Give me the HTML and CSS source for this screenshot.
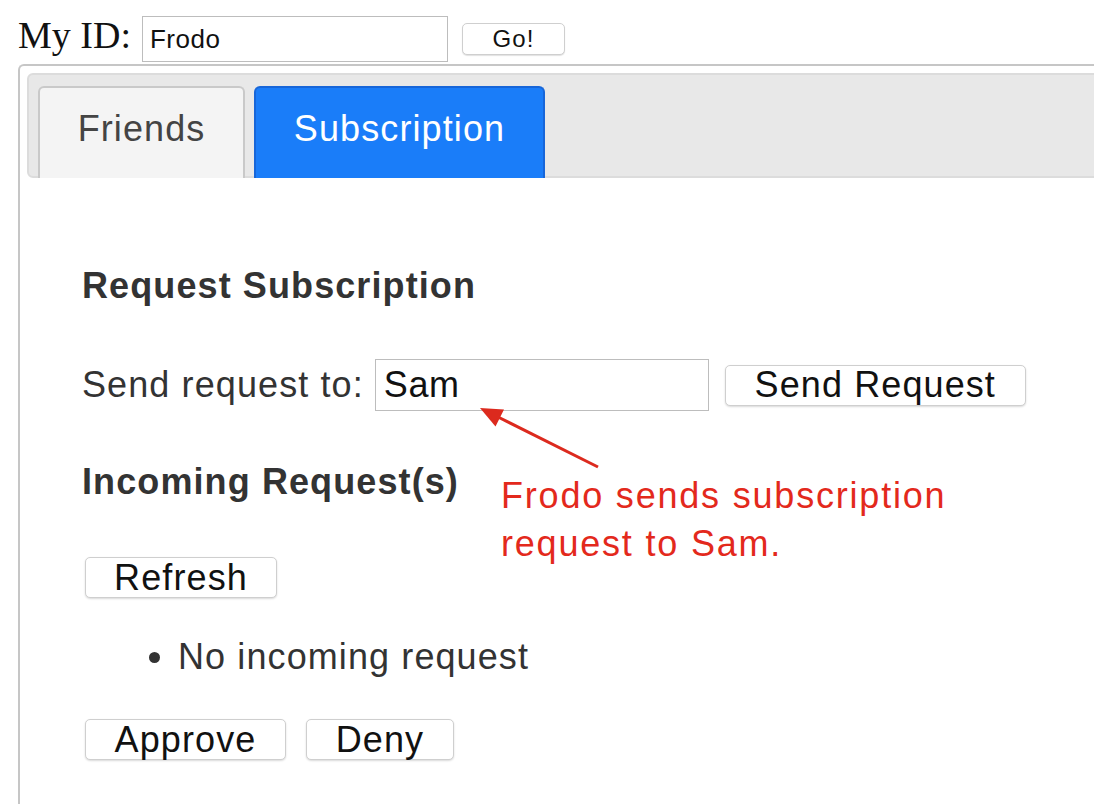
FILE: index.html
```html
<!DOCTYPE html>
<html>
<head>
<meta charset="utf-8">
<link rel="stylesheet" href="styles.css">
</head>
<body>
<div class="page">
  <div class="idrow">
    <span class="idlabel">My ID:</span>
    <input class="idinput" type="text" value="Frodo">
    <button class="gobtn">Go!</button>
  </div>
  <div class="panel">
    <div class="tabbar">
      <div class="tab tab-friends">Friends</div>
      <div class="tab tab-active">Subscription</div>
    </div>
    <div class="content">
      <h3 class="heading h-request">Request Subscription</h3>
      <div class="sendrow">
        <span class="sendlabel">Send request to:</span>
        <input class="sendinput" type="text" value="Sam">
        <button class="btn sendbtn">Send Request</button>
      </div>
      <h3 class="heading h-incoming">Incoming Request(s)</h3>
      <button class="btn refreshbtn">Refresh</button>
      <ul class="reqlist">
        <li>No incoming request</li>
      </ul>
      <div class="actions">
        <button class="btn approvebtn">Approve</button>
        <button class="btn denybtn">Deny</button>
      </div>
    </div>
  </div>
  <div class="note">Frodo sends subscription<br>request to Sam.</div>
  <svg class="arrow" width="140" height="80" viewBox="0 0 140 80">
    <line x1="128" y1="67" x2="28" y2="17" stroke="#dc2a1e" stroke-width="3"/>
    <polygon points="10,8 34,9.5 25.5,26.5" fill="#dc2a1e"/>
  </svg>
</div>
</body>
</html>
```
FILE: styles.css
```css
html, body {
  margin: 0;
  padding: 0;
  background: #ffffff;
  overflow: hidden;
}
.page {
  width: 1094px;
  height: 804px;
  overflow: hidden;
  padding-left: 18px;
  box-sizing: border-box;
  position: relative;
}
.idrow {
  display: flex;
  align-items: flex-start;
  height: 64px;
}
.idlabel {
  font-family: "Liberation Serif", serif;
  font-size: 38px;
  line-height: 38px;
  color: #111;
  margin: 16px 11px 0 0;
}
.idinput {
  width: 306px;
  height: 46px;
  box-sizing: border-box;
  border: 1px solid #bdbdbd;
  padding: 0 7px;
  font-family: "Liberation Sans", sans-serif;
  font-size: 26px;
  letter-spacing: 0.5px;
  color: #111;
  margin: 16px 14px 0 0;
  outline: none;
}
.gobtn {
  width: 103px;
  height: 32px;
  box-sizing: border-box;
  border: 1px solid #cfcfcf;
  border-radius: 5px;
  background: #fff;
  box-shadow: 0 1px 1px rgba(0,0,0,0.12);
  font-family: "Liberation Sans", sans-serif;
  font-size: 24px;
  letter-spacing: 1px;
  color: #111;
  padding: 0;
  line-height: 30px;
  margin-top: 23px;
}
.panel {
  width: 1200px;
  height: 760px;
  border-top: 2px solid #c6c6c6;
  border-left: 2px solid #c6c6c6;
  border-top-left-radius: 6px;
  padding: 7px 0 0 7px;
  box-sizing: border-box;
}
.tabbar {
  display: flex;
  align-items: flex-end;
  gap: 9px;
  height: 105px;
  box-sizing: border-box;
  background: #e8e8e8;
  border: 2px solid #dcdcdc;
  border-radius: 6px 0 0 6px;
  padding-left: 9px;
}
.tab {
  height: 92px;
  box-sizing: border-box;
  display: flex;
  align-items: center;
  justify-content: center;
  font-family: "Liberation Sans", sans-serif;
  font-size: 36px;
  letter-spacing: 1.1px;
  border-radius: 6px 6px 0 0;
  margin-bottom: -2px;
  padding-bottom: 9px;
}
.tab-friends {
  width: 207px;
  background: #f4f4f4;
  border: 2px solid #c9c9c9;
  border-bottom: none;
  color: #444;
}
.tab-active {
  width: 291px;
  background: #1a7df9;
  border: 2px solid #1766d9;
  border-bottom: none;
  color: #fff;
}
.content {
  padding-left: 55px;
  padding-top: 88px;
  font-family: "Liberation Sans", sans-serif;
  font-size: 36px;
  letter-spacing: 1.1px;
  color: #333;
}
.heading {
  margin: 0;
  font-size: 36px;
  font-weight: bold;
  line-height: 40px;
  color: #333;
}
.sendrow {
  display: flex;
  align-items: center;
  margin-top: 53px;
  height: 52px;
}
.sendlabel {
  margin-right: 11px;
}
.sendinput {
  width: 334px;
  height: 52px;
  box-sizing: border-box;
  border: 1px solid #bdbdbd;
  padding: 0 8px;
  font-family: "Liberation Sans", sans-serif;
  font-size: 36px;
  letter-spacing: 0.6px;
  color: #111;
  outline: none;
  margin: 0 16px 0 0;
}
.btn {
  height: 41px;
  box-sizing: border-box;
  border: 1px solid #cfcfcf;
  border-radius: 5px;
  background: #fff;
  box-shadow: 0 1px 2px rgba(0,0,0,0.15);
  font-family: "Liberation Sans", sans-serif;
  font-size: 36px;
  letter-spacing: 1.1px;
  line-height: 38px;
  color: #111;
  padding: 0;
}
.sendbtn { width: 301px; }
.h-incoming { margin-top: 51px; }
.refreshbtn {
  display: block;
  width: 192px;
  margin-top: 55px;
  margin-left: 3px;
}
.reqlist {
  margin: 39px 0 0 0;
  padding-left: 96px;
  line-height: 40px;
}
.actions {
  display: flex;
  gap: 20px;
  margin-top: 42px;
  margin-left: 3px;
}
.approvebtn { width: 201px; }
.denybtn { width: 148px; }
.note {
  position: absolute;
  left: 501px;
  top: 472px;
  color: #e3291c;
  font-family: "Liberation Sans", sans-serif;
  font-size: 36px;
  letter-spacing: 1.8px;
  line-height: 48px;
}
.arrow {
  position: absolute;
  left: 470px;
  top: 400px;
}
```
